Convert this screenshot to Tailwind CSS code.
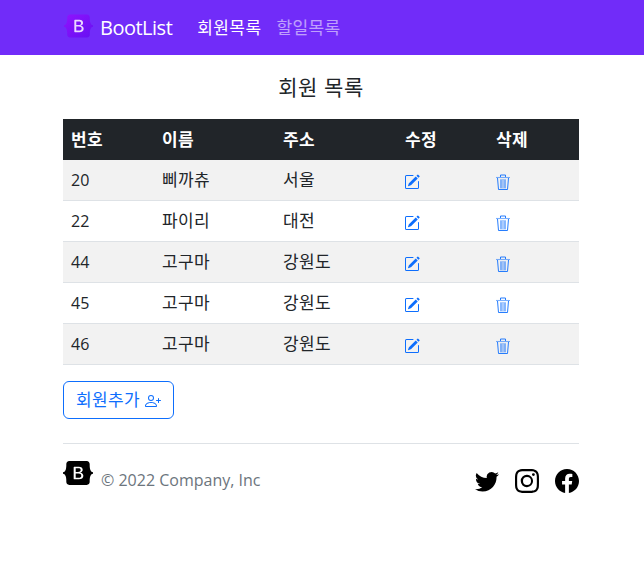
<!DOCTYPE html>
<html lang="ko">
<head>
<meta charset="utf-8">
<title>BootList</title>
<script src="https://cdn.jsdelivr.net/npm/@tailwindcss/browser@4"></script>
</head>
<body class="bg-white text-[#212529] font-['Open_Sans','Noto_Sans_CJK_KR',sans-serif] text-base">
<nav class="h-[55px] bg-[#712cf9] flex items-center pl-[64px]">
  <a class="flex items-center gap-[7px] text-white text-[20px] font-medium tracking-[-0.5px]">
    <svg class="w-[29px] h-[24px] -mt-[4px]" viewBox="0 0 118 94"><defs><linearGradient id="g" x1="0" y1="0" x2="1" y2="1"><stop offset="0" stop-color="#9013fe"/><stop offset="1" stop-color="#6610f2"/></linearGradient></defs><path fill="url(#g)" fill-rule="evenodd" d="M24.509 0c-6.733 0-11.715 5.893-11.492 12.284.214 6.14-.064 14.092-2.066 20.577C8.943 39.365 5.547 43.485 0 44.014v5.972c5.547.529 8.943 4.649 10.951 11.153 2.002 6.485 2.28 14.437 2.066 20.577C12.794 88.106 17.776 94 24.51 94H93.5c6.733 0 11.714-5.893 11.491-12.284-.214-6.14.064-14.092 2.066-20.577 2.009-6.504 5.396-10.624 10.943-11.153v-5.972c-5.547-.529-8.934-4.649-10.943-11.153-2.002-6.484-2.28-14.437-2.066-20.577C105.214 5.894 100.233 0 93.5 0H24.508z"/><path fill="#ead9ff" fill-rule="evenodd" d="M80 57.863C80 66.663 73.436 72 62.543 72H44a2 2 0 01-2-2V24a2 2 0 012-2h18.437c9.083 0 15.044 4.92 15.044 12.474 0 5.302-4.01 10.049-9.119 10.88v.277C75.317 46.394 80 51.21 80 57.863zM60.521 28.34H49.948v14.934h8.905c6.884 0 10.68-2.772 10.68-7.727 0-4.643-3.264-7.207-8.012-7.207zM49.948 49.2v16.458H60.91c7.167 0 10.964-2.876 10.964-8.281 0-5.406-3.903-8.178-11.283-8.178H49.948z"/></svg>
    <span>BootList</span>
  </a>
  <div class="flex gap-[15px] ml-[25px] text-[17px] tracking-[0.4px]">
    <a class="text-white">회원목록</a>
    <a class="text-white/55">할일목록</a>
  </div>
</nav>
<main class="pl-[63px] pr-[65px]">
  <h1 class="text-[21px] tracking-[0.6px] text-center leading-[24px] mt-[20px] mb-[20px]">회원 목록</h1>
  <table class="w-[516px] table-fixed border-collapse text-left text-[17px] tracking-[0.4px]">
    <thead>
      <tr class="bg-[#212529] text-white h-[41px]">
        <th class="w-[91px] px-2 font-bold">번호</th>
        <th class="w-[121px] px-2 font-bold">이름</th>
        <th class="w-[122px] px-2 font-bold">주소</th>
        <th class="w-[91px] px-2 font-bold">수정</th>
        <th class="w-[91px] px-2 font-bold">삭제</th>
      </tr>
    </thead>
    <tbody>
      <tr class="h-[40px] bg-[#f2f2f2] border-b border-[#dee2e6]">
        <td class="px-2 text-base tracking-normal">20</td><td class="px-2">삐까츄</td><td class="px-2">서울</td>
        <td class="px-2"><svg class="w-4 h-4 mt-[4px] -ml-[1px] text-[#0d6efd]" viewBox="0 0 16 16" fill="currentColor"><path d="M15.502 1.94a.5.5 0 0 1 0 .706L14.459 3.69l-2-2L13.502.646a.5.5 0 0 1 .707 0l1.293 1.293zm-1.75 2.456-2-2L4.939 9.21a.5.5 0 0 0-.121.196l-.805 2.414a.25.25 0 0 0 .316.316l2.414-.805a.5.5 0 0 0 .196-.12l6.813-6.814z"/><path fill-rule="evenodd" d="M1 13.5A1.5 1.5 0 0 0 2.5 15h11a1.5 1.5 0 0 0 1.5-1.5v-6a.5.5 0 0 0-1 0v6a.5.5 0 0 1-.5.5h-11a.5.5 0 0 1-.5-.5v-11a.5.5 0 0 1 .5-.5H9a.5.5 0 0 0 0-1H2.5A1.5 1.5 0 0 0 1 2.5v11z"/></svg></td>
        <td class="px-2"><svg class="w-4 h-4 mt-[4px] -ml-[1px]" viewBox="0 0 16 16" fill="none" stroke="#0d6efd" stroke-width=".9"><path d="M5 5h6v9.5H5z" fill="#0d6efd" fill-opacity=".35" stroke="none"/><path d="M1 3.5h14" stroke-opacity=".55" stroke-width="1.1"/><path d="M5.5 3V1h5v2"/><path d="M2.5 4l1 11.5h9L13.500 4"/><path d="M6 6v8M10 6v8" stroke-opacity=".5"/></svg></td>
      </tr>
      <tr class="h-[41px] border-b border-[#dee2e6]">
        <td class="px-2 text-base tracking-normal">22</td><td class="px-2">파이리</td><td class="px-2">대전</td>
        <td class="px-2"><svg class="w-4 h-4 mt-[4px] -ml-[1px] text-[#0d6efd]" viewBox="0 0 16 16" fill="currentColor"><path d="M15.502 1.94a.5.5 0 0 1 0 .706L14.459 3.69l-2-2L13.502.646a.5.5 0 0 1 .707 0l1.293 1.293zm-1.75 2.456-2-2L4.939 9.21a.5.5 0 0 0-.121.196l-.805 2.414a.25.25 0 0 0 .316.316l2.414-.805a.5.5 0 0 0 .196-.12l6.813-6.814z"/><path fill-rule="evenodd" d="M1 13.5A1.5 1.5 0 0 0 2.5 15h11a1.5 1.5 0 0 0 1.5-1.5v-6a.5.5 0 0 0-1 0v6a.5.5 0 0 1-.5.5h-11a.5.5 0 0 1-.5-.5v-11a.5.5 0 0 1 .5-.5H9a.5.5 0 0 0 0-1H2.5A1.5 1.5 0 0 0 1 2.5v11z"/></svg></td>
        <td class="px-2"><svg class="w-4 h-4 mt-[4px] -ml-[1px]" viewBox="0 0 16 16" fill="none" stroke="#0d6efd" stroke-width=".9"><path d="M5 5h6v9.5H5z" fill="#0d6efd" fill-opacity=".35" stroke="none"/><path d="M1 3.5h14" stroke-opacity=".55" stroke-width="1.1"/><path d="M5.5 3V1h5v2"/><path d="M2.5 4l1 11.5h9L13.500 4"/><path d="M6 6v8M10 6v8" stroke-opacity=".5"/></svg></td>
      </tr>
      <tr class="h-[41px] bg-[#f2f2f2] border-b border-[#dee2e6]">
        <td class="px-2 text-base tracking-normal">44</td><td class="px-2">고구마</td><td class="px-2">강원도</td>
        <td class="px-2"><svg class="w-4 h-4 mt-[4px] -ml-[1px] text-[#0d6efd]" viewBox="0 0 16 16" fill="currentColor"><path d="M15.502 1.94a.5.5 0 0 1 0 .706L14.459 3.69l-2-2L13.502.646a.5.5 0 0 1 .707 0l1.293 1.293zm-1.75 2.456-2-2L4.939 9.21a.5.5 0 0 0-.121.196l-.805 2.414a.25.25 0 0 0 .316.316l2.414-.805a.5.5 0 0 0 .196-.12l6.813-6.814z"/><path fill-rule="evenodd" d="M1 13.5A1.5 1.5 0 0 0 2.5 15h11a1.5 1.5 0 0 0 1.5-1.5v-6a.5.5 0 0 0-1 0v6a.5.5 0 0 1-.5.5h-11a.5.5 0 0 1-.5-.5v-11a.5.5 0 0 1 .5-.5H9a.5.5 0 0 0 0-1H2.5A1.5 1.5 0 0 0 1 2.5v11z"/></svg></td>
        <td class="px-2"><svg class="w-4 h-4 mt-[4px] -ml-[1px]" viewBox="0 0 16 16" fill="none" stroke="#0d6efd" stroke-width=".9"><path d="M5 5h6v9.5H5z" fill="#0d6efd" fill-opacity=".35" stroke="none"/><path d="M1 3.5h14" stroke-opacity=".55" stroke-width="1.1"/><path d="M5.5 3V1h5v2"/><path d="M2.5 4l1 11.5h9L13.500 4"/><path d="M6 6v8M10 6v8" stroke-opacity=".5"/></svg></td>
      </tr>
      <tr class="h-[41px] border-b border-[#dee2e6]">
        <td class="px-2 text-base tracking-normal">45</td><td class="px-2">고구마</td><td class="px-2">강원도</td>
        <td class="px-2"><svg class="w-4 h-4 mt-[4px] -ml-[1px] text-[#0d6efd]" viewBox="0 0 16 16" fill="currentColor"><path d="M15.502 1.94a.5.5 0 0 1 0 .706L14.459 3.69l-2-2L13.502.646a.5.5 0 0 1 .707 0l1.293 1.293zm-1.75 2.456-2-2L4.939 9.21a.5.5 0 0 0-.121.196l-.805 2.414a.25.25 0 0 0 .316.316l2.414-.805a.5.5 0 0 0 .196-.12l6.813-6.814z"/><path fill-rule="evenodd" d="M1 13.5A1.5 1.5 0 0 0 2.5 15h11a1.5 1.5 0 0 0 1.5-1.5v-6a.5.5 0 0 0-1 0v6a.5.5 0 0 1-.5.5h-11a.5.5 0 0 1-.5-.5v-11a.5.5 0 0 1 .5-.5H9a.5.5 0 0 0 0-1H2.5A1.5 1.5 0 0 0 1 2.5v11z"/></svg></td>
        <td class="px-2"><svg class="w-4 h-4 mt-[4px] -ml-[1px]" viewBox="0 0 16 16" fill="none" stroke="#0d6efd" stroke-width=".9"><path d="M5 5h6v9.5H5z" fill="#0d6efd" fill-opacity=".35" stroke="none"/><path d="M1 3.5h14" stroke-opacity=".55" stroke-width="1.1"/><path d="M5.5 3V1h5v2"/><path d="M2.5 4l1 11.5h9L13.500 4"/><path d="M6 6v8M10 6v8" stroke-opacity=".5"/></svg></td>
      </tr>
      <tr class="h-[41px] bg-[#f2f2f2] border-b border-[#dee2e6]">
        <td class="px-2 text-base tracking-normal">46</td><td class="px-2">고구마</td><td class="px-2">강원도</td>
        <td class="px-2"><svg class="w-4 h-4 mt-[4px] -ml-[1px] text-[#0d6efd]" viewBox="0 0 16 16" fill="currentColor"><path d="M15.502 1.94a.5.5 0 0 1 0 .706L14.459 3.69l-2-2L13.502.646a.5.5 0 0 1 .707 0l1.293 1.293zm-1.75 2.456-2-2L4.939 9.21a.5.5 0 0 0-.121.196l-.805 2.414a.25.25 0 0 0 .316.316l2.414-.805a.5.5 0 0 0 .196-.12l6.813-6.814z"/><path fill-rule="evenodd" d="M1 13.5A1.5 1.5 0 0 0 2.5 15h11a1.5 1.5 0 0 0 1.5-1.5v-6a.5.5 0 0 0-1 0v6a.5.5 0 0 1-.5.5h-11a.5.5 0 0 1-.5-.5v-11a.5.5 0 0 1 .5-.5H9a.5.5 0 0 0 0-1H2.5A1.5 1.5 0 0 0 1 2.5v11z"/></svg></td>
        <td class="px-2"><svg class="w-4 h-4 mt-[4px] -ml-[1px]" viewBox="0 0 16 16" fill="none" stroke="#0d6efd" stroke-width=".9"><path d="M5 5h6v9.5H5z" fill="#0d6efd" fill-opacity=".35" stroke="none"/><path d="M1 3.5h14" stroke-opacity=".55" stroke-width="1.1"/><path d="M5.5 3V1h5v2"/><path d="M2.5 4l1 11.5h9L13.500 4"/><path d="M6 6v8M10 6v8" stroke-opacity=".5"/></svg></td>
      </tr>
    </tbody>
  </table>
  <button class="mt-4 w-[111px] h-[38px] border border-[#0d6efd] rounded-md text-[#0d6efd] text-[17px] tracking-[0.4px] flex items-center justify-center gap-[5px]">
    <span>회원추가</span>
    <svg class="w-4 h-4 mt-[3px]" viewBox="0 0 16 16" fill="currentColor"><path d="M6 8a3 3 0 1 0 0-6 3 3 0 0 0 0 6zm2-3a2 2 0 1 1-4 0 2 2 0 0 1 4 0zm4 8c0 1-1 1-1 1H1s-1 0-1-1 1-4 6-4 6 3 6 4zm-1-.004c-.001-.246-.154-.986-.832-1.664C9.516 10.68 8.289 10 6 10c-2.29 0-3.516.68-4.168 1.332-.678.678-.83 1.418-.832 1.664h10z"/><path fill-rule="evenodd" d="M13.5 5a.5.5 0 0 1 .5.5V7h1.5a.5.5 0 0 1 0 1H14v1.5a.5.5 0 0 1-1 0V8h-1.5a.5.5 0 0 1 0-1H13V5.5a.5.5 0 0 1 .5-.5z"/></svg>
  </button>
  <footer class="mt-6 border-t border-[#dee2e6] pt-[17px] flex justify-between items-start">
    <div class="flex items-start gap-[8px]">
      <svg class="w-[30px] h-[24px]" viewBox="0 0 118 94" fill="#000"><path fill-rule="evenodd" d="M24.509 0c-6.733 0-11.715 5.893-11.492 12.284.214 6.14-.064 14.092-2.066 20.577C8.943 39.365 5.547 43.485 0 44.014v5.972c5.547.529 8.943 4.649 10.951 11.153 2.002 6.485 2.28 14.437 2.066 20.577C12.794 88.106 17.776 94 24.51 94H93.5c6.733 0 11.714-5.893 11.491-12.284-.214-6.14.064-14.092 2.066-20.577 2.009-6.504 5.396-10.624 10.943-11.153v-5.972c-5.547-.529-8.934-4.649-10.943-11.153-2.002-6.484-2.28-14.437-2.066-20.577C105.214 5.894 100.233 0 93.5 0H24.508zM80 57.863C80 66.663 73.436 72 62.543 72H44a2 2 0 01-2-2V24a2 2 0 012-2h18.437c9.083 0 15.044 4.92 15.044 12.474 0 5.302-4.01 10.049-9.119 10.88v.277C75.317 46.394 80 51.21 80 57.863zM60.521 28.34H49.948v14.934h8.905c6.884 0 10.68-2.772 10.68-7.727 0-4.643-3.264-7.207-8.012-7.207zM49.948 49.2v16.458H60.91c7.167 0 10.964-2.876 10.964-8.281 0-5.406-3.903-8.178-11.283-8.178H49.948z"/></svg>
      <span class="text-[#6c757d] mt-[7px]">© 2022 Company, Inc</span>
    </div>
    <div class="flex gap-4 mt-[8px]">
      <svg class="w-6 h-6" viewBox="0 0 16 16" fill="#000"><path d="M5.026 15c6.038 0 9.341-5.003 9.341-9.334 0-.14 0-.282-.006-.422A6.685 6.685 0 0 0 16 3.542a6.658 6.658 0 0 1-1.889.518 3.301 3.301 0 0 0 1.447-1.817 6.533 6.533 0 0 1-2.087.793A3.286 3.286 0 0 0 7.875 6.03a9.325 9.325 0 0 1-6.767-3.429 3.289 3.289 0 0 0 1.018 4.382A3.323 3.323 0 0 1 .64 6.575v.045a3.288 3.288 0 0 0 2.632 3.218 3.203 3.203 0 0 1-.865.115 3.23 3.23 0 0 1-.614-.057 3.283 3.283 0 0 0 3.067 2.277A6.588 6.588 0 0 1 .78 13.58a6.32 6.32 0 0 1-.78-.045A9.344 9.344 0 0 0 5.026 15z"/></svg>
      <svg class="w-6 h-6" viewBox="0 0 16 16" fill="#000"><path d="M8 0C5.829 0 5.556.01 4.703.048 3.85.088 3.269.222 2.76.42a3.917 3.917 0 0 0-1.417.923A3.927 3.927 0 0 0 .42 2.76C.222 3.268.087 3.85.048 4.7.01 5.555 0 5.827 0 8.001c0 2.172.01 2.444.048 3.297.04.852.174 1.433.372 1.942.205.526.478.972.923 1.417.444.445.89.719 1.416.923.51.198 1.09.333 1.942.372C5.555 15.99 5.827 16 8 16s2.444-.01 3.298-.048c.851-.04 1.434-.174 1.943-.372a3.916 3.916 0 0 0 1.416-.923c.445-.445.718-.891.923-1.417.197-.509.332-1.09.372-1.942C15.99 10.445 16 10.173 16 8s-.01-2.445-.048-3.299c-.04-.851-.175-1.433-.372-1.941a3.926 3.926 0 0 0-.923-1.417A3.911 3.911 0 0 0 13.24.42c-.51-.198-1.092-.333-1.943-.372C10.443.01 10.172 0 7.998 0h.003zm-.717 1.442h.718c2.136 0 2.389.007 3.232.046.78.035 1.204.166 1.486.275.373.145.64.319.92.599.28.28.453.546.598.92.11.281.24.705.275 1.485.039.843.047 1.096.047 3.231s-.008 2.389-.047 3.232c-.035.78-.166 1.203-.275 1.485a2.47 2.47 0 0 1-.599.919c-.28.28-.546.453-.92.598-.28.11-.704.24-1.485.276-.843.038-1.096.047-3.232.047s-2.39-.009-3.233-.047c-.78-.036-1.203-.166-1.485-.276a2.478 2.478 0 0 1-.92-.598 2.48 2.48 0 0 1-.6-.92c-.109-.281-.24-.705-.275-1.485-.038-.843-.046-1.096-.046-3.233 0-2.136.008-2.388.046-3.231.036-.78.166-1.204.276-1.486.145-.373.319-.64.599-.92.28-.28.546-.453.92-.598.282-.11.705-.24 1.485-.276.738-.034 1.024-.044 2.515-.045v.002zm4.988 1.328a.96.96 0 1 0 0 1.92.96.96 0 0 0 0-1.92zm-4.27 1.122a4.109 4.109 0 1 0 0 8.217 4.109 4.109 0 0 0 0-8.217zm0 1.441a2.667 2.667 0 1 1 0 5.334 2.667 2.667 0 0 1 0-5.334z"/></svg>
      <svg class="w-6 h-6" viewBox="0 0 16 16" fill="#000"><path d="M16 8.049c0-4.446-3.582-8.05-8-8.05C3.58 0-.002 3.603-.002 8.05c0 4.017 2.926 7.347 6.75 7.951v-5.625h-2.03V8.05H6.75V6.275c0-2.017 1.195-3.131 3.022-3.131.876 0 1.791.157 1.791.157v1.98h-1.009c-.993 0-1.303.621-1.303 1.258v1.51h2.218l-.354 2.326H9.25V16c3.824-.604 6.75-3.934 6.75-7.951z"/></svg>
    </div>
  </footer>
</main>
</body>
</html>
